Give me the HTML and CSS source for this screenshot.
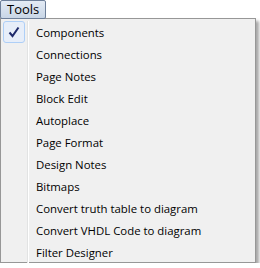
FILE: index.html
```html
<!DOCTYPE html>
<html lang="en">
<head>
    <meta charset="UTF-8">
    <title>Tools menu</title>
    <link rel="stylesheet" href="styles.css">
</head>
<body>
    <div class="menubar">
        <span class="menu-title">Tools</span>
    </div>
    <div class="menu">
        <div class="item">
            <span class="gutter">
                <span class="check">
                    <svg width="12" height="12" viewBox="0 0 12 12">
                        <path d="M1.5 6.5 L4.5 10 L10.5 1.5" fill="none" stroke="#1f2a6b" stroke-width="2"/>
                    </svg>
                </span>
            </span>
            <span class="label">Components</span>
        </div>
        <div class="item"><span class="gutter"></span><span class="label">Connections</span></div>
        <div class="item"><span class="gutter"></span><span class="label">Page Notes</span></div>
        <div class="item"><span class="gutter"></span><span class="label">Block Edit</span></div>
        <div class="item"><span class="gutter"></span><span class="label">Autoplace</span></div>
        <div class="item"><span class="gutter"></span><span class="label">Page Format</span></div>
        <div class="item"><span class="gutter"></span><span class="label">Design Notes</span></div>
        <div class="item"><span class="gutter"></span><span class="label">Bitmaps</span></div>
        <div class="item"><span class="gutter"></span><span class="label">Convert truth table to diagram</span></div>
        <div class="item"><span class="gutter"></span><span class="label">Convert VHDL Code to diagram</span></div>
        <div class="item"><span class="gutter"></span><span class="label">Filter Designer</span></div>
    </div>
</body>
</html>
```

FILE: styles.css
```css
body {
    margin: 0;
    padding: 0;
    background-color: #ffffff;
    font-family: 'Open Sans', 'Noto Sans', sans-serif;
    font-size: 11.4px;
    color: #000000;
}
.menubar {
    height: 18px;
    display: flex;
}
.menu-title {
    box-sizing: border-box;
    height: 19px;
    padding: 0 6px;
    border: 1px solid #6d7f99;
    border-radius: 2px;
    background: linear-gradient(#e3ebf5, #c9d6e6);
    font-size: 13px;
    line-height: 16px;
}
.menu {
    box-sizing: border-box;
    width: 256px;
    height: 245px;
    border: 1px solid #979797;
    background-color: #f0f0f0;
    padding: 2px;
    box-shadow: 3px 3px 3px rgba(0, 0, 0, 0.35);
}
.item {
    display: flex;
    align-items: center;
    height: 22px;
}
.gutter {
    width: 24px;
    height: 22px;
    margin-right: 8px;
    border-right: 1px solid #e2e3e3;
    box-shadow: 1px 0 0 #ffffff;
    display: flex;
    align-items: center;
}
.check {
    box-sizing: border-box;
    width: 22px;
    height: 22px;
    border: 1px solid #aecff7;
    border-radius: 3px;
    background-color: #e7eef9;
    display: flex;
    align-items: center;
    justify-content: center;
}
.label {
    white-space: nowrap;
}
```
